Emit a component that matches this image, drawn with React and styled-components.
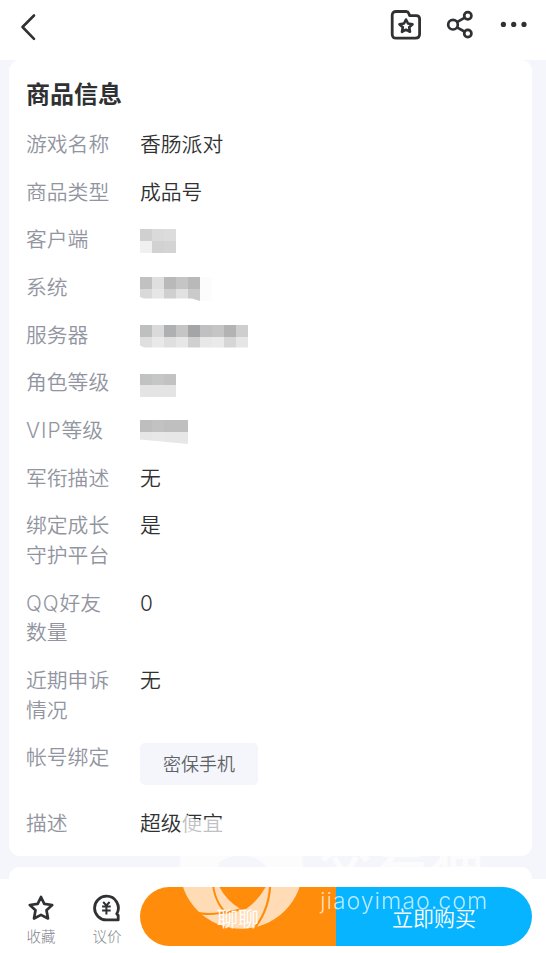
import React from 'react'
import styled, { createGlobalStyle, css } from 'styled-components'

const GlobalStyle = createGlobalStyle`
    * {
        box-sizing: border-box;
    }
    body {
        margin: 0;
        background-color: #f5f6fb;
        font-family: "Noto Sans CJK SC", "Noto Sans", sans-serif;
    }
`

// each mosaic is a list of rows with its cell colors
const MOSAICS = {
    client: [['#d0d0d0', '#dadada', '#dcdcdc'], ['#f0f0f0', '#d2d2d2', '#d4d4d4']],
    system: [
        ['#c1c1c1', '#dfdfdf', '#b9b9b9', '#c5c5c5', '#b9b9b9', '#fcfcfc'],
        ['#d9d9d9', '#e6e6e6', '#cfcfcf', '#e1e1e1', '#cacaca', '#fcfcfc']
    ],
    server: [
        ['#bdc0bf', '#dadada', '#aeb0b2', '#c5c5c5', '#a4a5a7', '#c0c0c0', '#c5c5c5', '#b3b3b3', '#cecece'],
        ['#dfdfdf', '#e9e9e9', '#dfdfdf', '#e7e7e7', '#d0d0d0', '#e8e8e8', '#eaeaea', '#d6d6d6', '#e6e6e6']
    ],
    level: [['#c2c2c2', '#c4c7c6', '#c2c2c2'], ['#e4e4e4', '#e4e4e4', '#e4e4e4']],
    vip: [['#bebebe', '#c2c2c2', '#bfbfbf', '#bfbfbf'], ['#e6e6e6', '#e8e8e8', '#e7e7e7', '#e7e7e7']]
}

const CLIPS = {
    system: 'polygon(0 0, 100% 0, 100% 24px, 60px 24px, 52px 21.5px, 4px 21.5px, 0 20px)',
    server: 'polygon(0 0, 100% 0, 100% 22.5px, 4px 22.5px, 0 20.5px)',
    level: 'polygon(0 1px, 100% 1px, 100% 100%, 0 100%)',
    vip: 'polygon(0 0, 100% 0, 100% 100%, 0 19.5px)'
}

const FIELDS = [
    { label: ['游戏名称'], value: '香肠派对' },
    { label: ['商品类型'], value: '成品号' },
    { label: ['客户端'], mosaic: 'client', top: 3.7 },
    { label: ['系统'], mosaic: 'system', top: 4 },
    { label: ['服务器'], mosaic: 'server', top: 4.3 },
    { label: ['角色等级'], mosaic: 'level', top: 4.6 },
    { latin: 'VIP', label: ['等级'], mosaic: 'vip', top: 3.9 },
    { label: ['军衔描述'], value: '无' },
    { label: ['绑定成长', '守护平台'], value: '是' },
    { latin: 'QQ', label: ['好友', '数量'], value: '0' },
    { label: ['近期申诉', '情况'], value: '无' },
    { label: ['帐号绑定'], chip: '密保手机' },
    { label: ['描述'], value: '超级便宜' }
]

const Mosaic = ({ name, top }) => {
    return (
        <MosaicGrid clip={CLIPS[name]} columns={MOSAICS[name][0].length} top={top}>
            {MOSAICS[name].flat().map((color, i) => <Cell color={color} key={i} />)}
        </MosaicGrid>
    )
}

const IconBack = () => (
    <svg fill='none' height='30' viewBox='0 0 20 30' width='20'>
        <path d='M17 4.5 L5.5 16 L17 27.8' stroke='#303133' strokeLinecap='round' strokeLinejoin='round' strokeWidth='2.6' />
    </svg>
)

const IconFolder = () => (
    <svg fill='none' height='32' viewBox='0 0 32 32' width='32'>
        <path d='M6.2 2.5 H16.2 Q18 2.5 18.7 4.2 L19.6 6.6 H26.2 Q29.6 6.6 29.6 10 V25 Q29.6 29.2 25.4 29.2 H6.2 Q2.2 29.2 2.2 25 V6.5 Q2.2 2.5 6.2 2.5 Z' stroke='#303133' strokeLinejoin='round' strokeWidth='2.8' />
        <path d='M16 10.5 L18 14.5 L22.5 15.2 L19.2 18.3 L20 22.8 L16 20.7 L12 22.8 L12.8 18.3 L9.5 15.2 L14 14.5 Z' stroke='#303133' strokeLinejoin='round' strokeWidth='2.6' />
    </svg>
)

const IconShare = () => (
    <svg fill='none' height='30' viewBox='1 0 30 30' width='30'>
        <g stroke='#303133' strokeWidth='2.7'>
            <circle cx='8' cy='14.7' r='4.8' />
            <circle cx='22.8' cy='5.7' r='3.6' />
            <circle cx='22.8' cy='23.5' r='3.6' />
            <path d='M12 12.2 L19.8 7.7 M12 17.4 L19.8 21.7' />
        </g>
    </svg>
)

const IconMore = () => (
    <svg fill='#303133' height='8' viewBox='0 0 28 8' width='28'>
        <circle cx='3.4' cy='3.4' r='2.6' />
        <circle cx='13.7' cy='3.4' r='2.6' />
        <circle cx='24' cy='3.4' r='2.6' />
    </svg>
)

const IconStar = () => (
    <svg fill='none' height='28' viewBox='0 0 28 28' width='28'>
        <path d='M14 3 L17.3 9.9 L25.2 11 L19.5 16.2 L21 24.5 L14 20.9 L7 24.5 L8.5 16.2 L2.8 11 L10.7 9.9 Z' stroke='#303133' strokeLinejoin='round' strokeWidth='2.7' />
    </svg>
)

const IconBargain = () => (
    <svg fill='none' height='28' viewBox='0 0 28 28' width='28'>
        <path d='M13.4 2.2 A11.8 11.8 0 1 0 13.4 25.9 H25.2 V21.5 L23.8 19.8 A11.8 11.8 0 0 0 13.4 2.2 Z' stroke='#303133' strokeLinejoin='round' strokeWidth='2.8' />
        <path d='M10.2 8 L13.4 11.5 L16.6 8 M9.1 12.6 H17.7 M9.1 16.4 H17.7 M13.4 11.5 V20.6' stroke='#303133' strokeWidth='2' />
    </svg>
)

// round logo: disc with an ear, the opening and the blade gaps are cut out
const WatermarkLogo = () => (
    <svg height='125' viewBox='175 808 130 125' width='130'>
        <mask height='125' id='blades' maskUnits='userSpaceOnUse' width='130' x='175' y='808'>
            <circle cx='241.3' cy='867.1' fill='#fff' r='61.6' />
            <path d='M181 811 L187 815 L200 820 L230 820 L230 860 L180 867 Z' fill='#fff' />
            <path d='M189 808 V817 L198 820 L228 818 V808 Z' fill='#000' />
            <path d='M219.5 887 Q210 873 221 861 Q241 849 261 861 Q274 873 265.7 887 Q258 901 246.5 908.5 L239 908 Q226 900 219.5 887 Z' fill='#000' />
            <path d='M196 911.5 Q207 914 221 912 L221 914 Q211 915.5 202 914.8 Z' fill='#000' />
            <path d='M212.6 880 Q213.5 901 227 914' fill='none' stroke='#000' strokeWidth='2' />
            <path d='M270.3 880 Q270.5 907 255.5 927' fill='none' stroke='#000' strokeWidth='2.2' />
            <path d='M221 913 Q234 912 246.5 907.5' fill='none' stroke='#000' strokeWidth='2' />
        </mask>
        <rect fill='#fff' height='125' mask='url(#blades)' width='130' x='175' y='808' />
    </svg>
)

export default function App() {
    return (
        <Page>
            <GlobalStyle />
            <Header>
                <IconBack />
                <Actions>
                    <IconFolder />
                    <IconShare />
                    <IconMore />
                </Actions>
            </Header>
            <Card>
                <Title>商品信息</Title>
                {FIELDS.map(({ latin, label, value, mosaic, top, chip }) => (
                    <Row key={label[0]}>
                        <Label>
                            {label.map((line, i) => (
                                <div key={line}>
                                    {latin && i === 0 && <Latin>{latin}</Latin>}
                                    {line}
                                </div>
                            ))}
                        </Label>
                        {value && <Value>{value}</Value>}
                        {mosaic && <Mosaic name={mosaic} top={top} />}
                        {chip && <Chip>{chip}</Chip>}
                    </Row>
                ))}
            </Card>
            <NextCard />
            <Footer>
                <FooterOption>
                    <IconStar />
                    <span>收藏</span>
                </FooterOption>
                <FooterOption>
                    <IconBargain />
                    <span>议价</span>
                </FooterOption>
                <Buttons>
                    <Button>聊聊</Button>
                    <Button primary='true'>立即购买</Button>
                </Buttons>
            </Footer>
            <Watermark>
                <WatermarkLogo />
                <Brand>
                    <BrandName>交易猫</BrandName>
                    <BrandUrl>jiaoyimao.com</BrandUrl>
                </Brand>
            </Watermark>
        </Page>
    )
}

const Page = styled.div`
    position: relative;
    display: flex;
    flex-direction: column;
    width: 546px;
    height: 953px;
    overflow: hidden;
    background-color: #f5f6fb;
`
const Header = styled.header`
    display: flex;
    flex: 0 0 60px;
    justify-content: space-between;
    padding: 9px 18px 0 17px;
    background-color: #fff;
    & > svg {
        margin-top: 2px;
    }
`
const Actions = styled.div`
    display: flex;
    align-items: center;
    height: 31px;
    gap: 24px;
`
const Card = styled.section`
    flex: 0 0 796px;
    min-height: 0;
    margin: 0 14px 0 9px;
    padding: 16px 17px 0;
    border-radius: 11px;
    background-color: #fff;
`
const Title = styled.h1`
    margin: 0 0 20.9px;
    font-size: 24px;
    line-height: 33px;
    font-weight: 700;
    color: #303133;
`
const Row = styled.div`
    display: flex;
    align-items: flex-start;
    margin-bottom: 18.1px;
    font-family: Inter, "Noto Sans CJK SC", sans-serif;
    font-size: 20.8px;
    line-height: 29.6px;
    font-weight: 350;
    &:last-child {
        margin-bottom: 0;
    }
`
const Label = styled.div`
    flex: 0 0 114px;
    color: #92959f;
    white-space: nowrap;
`
const Latin = styled.span`
    letter-spacing: 1px;
`
const Value = styled.div`
    color: #303133;
`
const MosaicGrid = styled.div`
    display: grid;
    grid-template-columns: repeat(${({ columns }) => columns}, 12px);
    grid-auto-rows: 12px;
    margin-top: ${({ top }) => top}px;
    margin-bottom: -6px;
    ${({ clip }) => clip && css`clip-path: ${clip};`}
`
const Cell = styled.div`
    background-color: ${({ color }) => color};
`
const Chip = styled.div`
    width: 118px;
    height: 42px;
    margin-bottom: 6px;
    border-radius: 5px;
    background-color: #f5f6fb;
    font-size: 18px;
    line-height: 43px;
    text-align: center;
    color: #606266;
`
const NextCard = styled.section`
    flex: 0 0 12px;
    margin: 11px 14px 0 9px;
    border-radius: 11px 11px 0 0;
    background-color: #fff;
`
const Footer = styled.footer`
    display: flex;
    flex: 1;
    padding: 8px 14px 0 8px;
    background-color: #fff;
`
const FooterOption = styled.div`
    display: flex;
    flex-direction: column;
    align-items: center;
    width: 66px;
    padding-top: 7px;
    font-size: 14.5px;
    line-height: 28px;
    font-weight: 300;
    color: #82858f;
`
const Buttons = styled.div`
    display: flex;
    width: 392px;
    height: 59px;
    overflow: hidden;
    border-radius: 30px;
`
const Button = styled.button`
    flex: 1;
    padding: 1px 0 0;
    border: 0;
    font-family: inherit;
    font-size: 21px;
    font-weight: 350;
    color: #fff;
    background-color: ${({ primary }) => primary ? '#06b4ff' : '#ff8c0a'};
`
const Watermark = styled.div`
    position: absolute;
    left: 175px;
    top: 808px;
    display: flex;
    opacity: .7;
    pointer-events: none;
    color: #fff;
`
const Brand = styled.div`
    display: flex;
    flex-direction: column;
    padding: 18px 0 0 12px;
`
const BrandName = styled.div`
    font-size: 56px;
    line-height: 60px;
    font-weight: 500;
`
const BrandUrl = styled.div`
    margin-left: 3px;
    font-family: Inter, sans-serif;
    font-size: 23px;
    line-height: 30px;
    font-weight: 350;
    letter-spacing: 1.1px;
`
